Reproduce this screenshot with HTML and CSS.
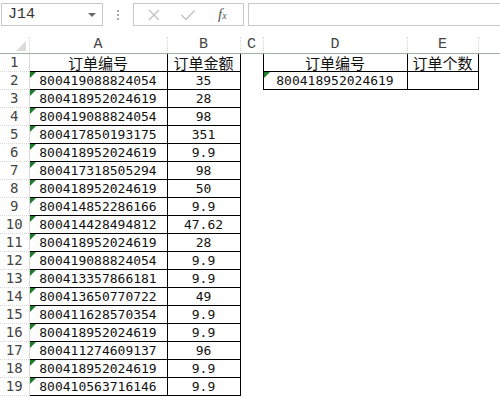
FILE: index.html
```html
<!DOCTYPE html>
<html lang="zh-CN">
<head>
    <meta charset="UTF-8">
    <title>Sheet</title>
    <link rel="stylesheet" href="styles.css">
</head>
<body>
    <div class="toolbar">
        <div class="name-box">
            <span class="cell-ref">J14</span>
            <span class="drop"></span>
        </div>
        <div class="grip"><i></i><i></i><i></i></div>
        <div class="fx-box">
            <svg class="ico" width="14" height="14" viewBox="0 0 14 14"><path d="M2 2 L12 12 M12 2 L2 12" stroke="#c4c0c8" stroke-width="1.3" fill="none"/></svg>
            <svg class="ico" width="16" height="14" viewBox="0 0 16 14"><path d="M1.5 7 L6 11.5 L14.5 2.5" stroke="#c4c0c8" stroke-width="1.4" fill="none"/></svg>
            <span class="fx">f<sub>x</sub></span>
        </div>
        <div class="formula"></div>
    </div>

    <table class="sheet">
        <colgroup>
            <col class="c-row"><col class="c-a"><col class="c-b"><col class="c-c"><col class="c-d"><col class="c-e"><col class="c-f">
        </colgroup>
        <tr class="heads">
            <th class="corner"><span class="tri"></span></th>
            <th>A</th><th>B</th><th>C</th><th>D</th><th>E</th><th class="last"></th>
        </tr>
        <tr><td class="num">1</td><td class="b cn">订单编号</td><td class="b cn">订单金额</td><td></td><td class="b cn">订单编号</td><td class="b cn">订单个数</td><td></td></tr>
        <tr><td class="num">2</td><td class="b txt">800419088824054</td><td class="b">35</td><td></td><td class="b txt">800418952024619</td><td class="b"></td><td></td></tr>
        <tr><td class="num">3</td><td class="b txt">800418952024619</td><td class="b">28</td><td></td><td></td><td></td><td></td></tr>
        <tr><td class="num">4</td><td class="b txt">800419088824054</td><td class="b">98</td><td></td><td></td><td></td><td></td></tr>
        <tr><td class="num">5</td><td class="b txt">800417850193175</td><td class="b">351</td><td></td><td></td><td></td><td></td></tr>
        <tr><td class="num">6</td><td class="b txt">800418952024619</td><td class="b">9.9</td><td></td><td></td><td></td><td></td></tr>
        <tr><td class="num">7</td><td class="b txt">800417318505294</td><td class="b">98</td><td></td><td></td><td></td><td></td></tr>
        <tr><td class="num">8</td><td class="b txt">800418952024619</td><td class="b">50</td><td></td><td></td><td></td><td></td></tr>
        <tr><td class="num">9</td><td class="b txt">800414852286166</td><td class="b">9.9</td><td></td><td></td><td></td><td></td></tr>
        <tr><td class="num">10</td><td class="b txt">800414428494812</td><td class="b">47.62</td><td></td><td></td><td></td><td></td></tr>
        <tr><td class="num">11</td><td class="b txt">800418952024619</td><td class="b">28</td><td></td><td></td><td></td><td></td></tr>
        <tr><td class="num">12</td><td class="b txt">800419088824054</td><td class="b">9.9</td><td></td><td></td><td></td><td></td></tr>
        <tr><td class="num">13</td><td class="b txt">800413357866181</td><td class="b">9.9</td><td></td><td></td><td></td><td></td></tr>
        <tr><td class="num">14</td><td class="b txt">800413650770722</td><td class="b">49</td><td></td><td></td><td></td><td></td></tr>
        <tr><td class="num">15</td><td class="b txt">800411628570354</td><td class="b">9.9</td><td></td><td></td><td></td><td></td></tr>
        <tr><td class="num">16</td><td class="b txt">800418952024619</td><td class="b">9.9</td><td></td><td></td><td></td><td></td></tr>
        <tr><td class="num">17</td><td class="b txt">800411274609137</td><td class="b">96</td><td></td><td></td><td></td><td></td></tr>
        <tr><td class="num">18</td><td class="b txt">800418952024619</td><td class="b">9.9</td><td></td><td></td><td></td><td></td></tr>
        <tr><td class="num">19</td><td class="b txt">800410563716146</td><td class="b">9.9</td><td></td><td></td><td></td><td></td></tr>
    </table>
</body>
</html>
```

FILE: styles.css
```css
body {
    margin: 0;
    background: #fff;
    width: 500px;
    height: 398px;
    overflow: hidden;
}

.toolbar {
    display: flex;
    align-items: flex-start;
    height: 37px;
    padding-top: 3px;
    box-sizing: border-box;
}

.name-box {
    margin-left: 1px;
    width: 102px;
    height: 23px;
    box-sizing: border-box;
    border: 1px solid #cbc6cd;
    display: flex;
    align-items: center;
    justify-content: space-between;
    padding: 0 6px 0 6px;
}

.cell-ref {
    font-family: "Liberation Mono", monospace;
    font-size: 15px;
    color: #333;
}

.drop {
    width: 0;
    height: 0;
    border-left: 4px solid transparent;
    border-right: 4px solid transparent;
    border-top: 4px solid #6a6a6a;
}

.grip {
    width: 30px;
    height: 23px;
    display: flex;
    flex-direction: column;
    align-items: center;
    justify-content: center;
    gap: 2px;
}

.grip i {
    width: 2px;
    height: 2px;
    background: #a8a8a8;
}

.fx-box {
    width: 111px;
    height: 23px;
    box-sizing: border-box;
    border: 1px solid #cbc6cd;
    display: flex;
    align-items: center;
    padding: 0 0 0 13px;
    gap: 19px;
}

.fx {
    font-family: "Liberation Serif", serif;
    font-style: italic;
    font-size: 15px;
    color: #555;
    margin-left: 3px;
}

.fx sub {
    font-size: 10px;
    vertical-align: 0;
}

.formula {
    margin-left: 4px;
    flex: 1;
    height: 23px;
    box-sizing: border-box;
    border: 1px solid #cbc6cd;
    border-right: none;
}

.sheet {
    border-collapse: collapse;
    table-layout: fixed;
    width: 500px;
}

.c-row { width: 29px; }
.c-a { width: 138px; }
.c-b { width: 73px; }
.c-c { width: 23px; }
.c-d { width: 144px; }
.c-e { width: 71px; }
.c-f { width: 22px; }

.heads th {
    height: 16px;
    padding: 0;
    font-family: "Liberation Mono", monospace;
    font-weight: normal;
    font-size: 15px;
    line-height: 16px;
    color: #444;
    border-right: 1px dotted #d2ddd2;
    border-bottom: 1px solid #9db3a4;
}

.heads th.last {
    border-right: none;
}

.corner {
    position: relative;
}

.tri {
    position: absolute;
    right: 3px;
    bottom: 2px;
    width: 0;
    height: 0;
    border-left: 10px solid transparent;
    border-bottom: 10px solid #dcdcdc;
}

.sheet td {
    height: 17px;
    padding: 0;
    text-align: center;
    font-family: "DejaVu Sans Mono", monospace;
    font-size: 13px;
    line-height: 17px;
    color: #111;
    white-space: nowrap;
    overflow: hidden;
}

.sheet td.num {
    font-size: 14px;
    color: #444;
    border-bottom: 1px dotted #d6d6d6;
    border-right: 1px solid #dadada;
}

.sheet td.b {
    border: 1px solid #000;
}

.sheet td.cn {
    font-family: "Noto Sans CJK SC", sans-serif;
    font-size: 15px;
}

.sheet td.txt {
    position: relative;
}

.sheet td.txt::before {
    content: "";
    position: absolute;
    left: 0;
    top: 0;
    width: 0;
    height: 0;
    border-top: 6px solid #1f7a2a;
    border-right: 6px solid transparent;
}
```
